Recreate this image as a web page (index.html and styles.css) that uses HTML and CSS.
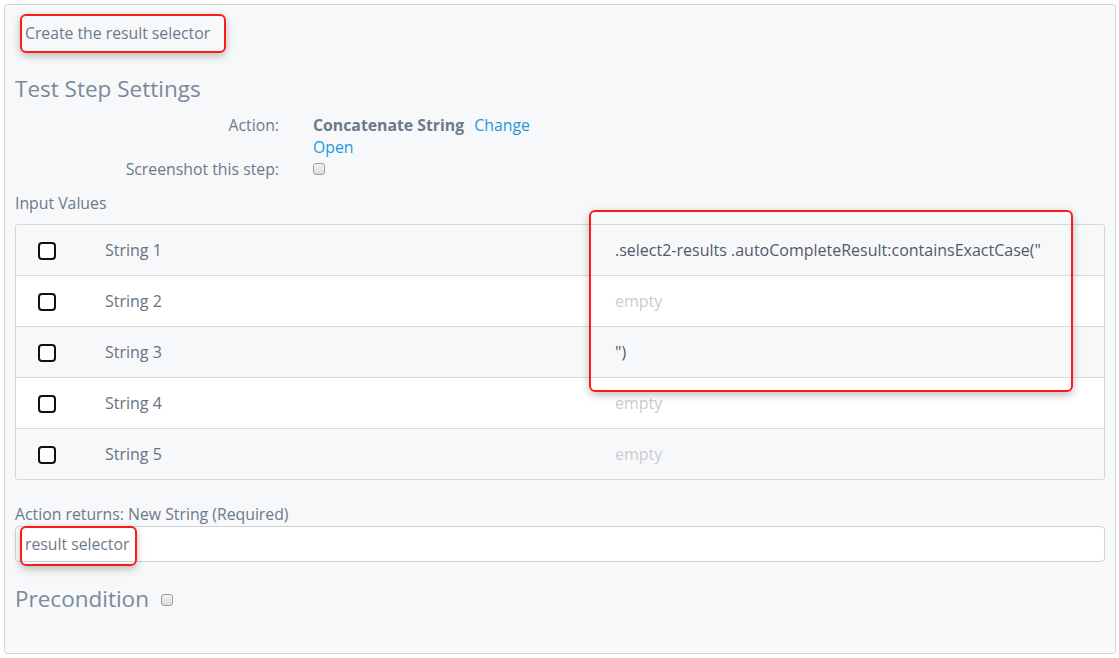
FILE: index.html
```html
<!DOCTYPE html>
<html>
<head>
<meta charset="utf-8">
<link rel="stylesheet" href="styles.css">
</head>
<body>
<div class="panel">
  <div class="note">Create the result selector</div>
  <h2 class="title">Test Step Settings</h2>
  <div class="settings">
    <div class="label">Action:</div>
    <div class="value"><b class="action-name">Concatenate String</b> <a class="link">Change</a><br><a class="link">Open</a></div>
    <div class="label">Screenshot this step:</div>
    <div class="value"><span class="mini-check"></span></div>
  </div>
  <div class="section-label">Input Values</div>
  <div class="table-wrap">
    <div class="table">
      <div class="row odd"><div class="cell-check"><span class="check"></span></div><div class="cell-name">String 1</div><div class="cell-val">.select2-results .autoCompleteResult:containsExactCase("</div></div>
      <div class="row"><div class="cell-check"><span class="check"></span></div><div class="cell-name">String 2</div><div class="cell-val empty">empty</div></div>
      <div class="row odd"><div class="cell-check"><span class="check"></span></div><div class="cell-name">String 3</div><div class="cell-val">")</div></div>
      <div class="row"><div class="cell-check"><span class="check"></span></div><div class="cell-name">String 4</div><div class="cell-val empty">empty</div></div>
      <div class="row odd"><div class="cell-check"><span class="check"></span></div><div class="cell-name">String 5</div><div class="cell-val empty">empty</div></div>
    </div>
    <div class="annot annot-table"></div>
  </div>
  <div class="section-label returns">Action returns: New String (Required)</div>
  <div class="input-wrap">
    <div class="input">result selector</div>
    <div class="annot annot-input"></div>
  </div>
  <div class="precondition"><span class="pre-title">Precondition</span><span class="mini-check"></span></div>
</div>
</body>
</html>
```
FILE: styles.css
```css
* { box-sizing: border-box; }
html, body { margin: 0; padding: 0; background: #ffffff; }
body {
  font-family: "Open Sans", "Liberation Sans", sans-serif;
  color: #6c7a89;
  padding: 4px;
  width: 1119px;
  height: 658px;
}
.panel {
  width: 1112px;
  height: 650px;
  background: #f7f8fa;
  border: 1px solid #d3d6da;
  border-radius: 3px;
  padding: 9px 10px 0 10px;
}
.note {
  display: inline-block;
  width: 206px;
  height: 39px;
  border: 2px solid #ff1a1a;
  border-radius: 6px;
  box-shadow: 0 3px 8px rgba(0,0,0,0.25);
  padding: 6px 0 0 3px;
  margin-left: 5px;
  font-size: 15.75px;
  line-height: 22px;
  color: #6c7a89;
  white-space: nowrap;
}
.title {
  margin: 21px 0 0 0;
  font-size: 22.5px;
  font-weight: 400;
  line-height: 30px;
  color: #7a8a9b;
}
.settings {
  display: grid;
  grid-template-columns: 264px 1fr;
  column-gap: 34px;
  margin-top: 10px;
  font-size: 15.8px;
  line-height: 22px;
}
.label { text-align: right; color: #6c7a89; }
.value { color: #6c7a89; }
.action-name { font-weight: 700; color: #6c7a89; margin-right: 6px; }
.link { color: #1d98d8; text-decoration: none; }
.mini-check {
  display: inline-block;
  width: 12px;
  height: 12px;
  border: 1px solid #9aa0a6;
  border-radius: 3px;
  background: linear-gradient(#f4f4f4, #dcdcdc);
  vertical-align: middle;
  position: relative;
  top: -2px;
}
.section-label {
  margin-top: 12px;
  font-size: 15.8px;
  line-height: 22px;
  color: #6c7a89;
}
.table-wrap { position: relative; margin-top: 10px; }
.table {
  border: 1px solid #d3d6da;
  border-radius: 3px;
  width: 1090px;
  overflow: hidden;
}
.row {
  display: grid;
  grid-template-columns: 89px 510px 1fr;
  align-items: center;
  height: 51px;
  background: #ffffff;
  border-top: 1px solid #d9dcdf;
  font-size: 16px;
}
.row:first-child { border-top: none; height: 50px; }
.row.odd { background: #f7f8fa; }
.cell-check { padding-left: 22px; display: flex; align-items: center; padding-top: 2px; }
.check {
  display: inline-block;
  width: 18px;
  height: 18px;
  border: 2px solid #111111;
  border-radius: 4px;
  background: #ffffff;
}
.cell-name { color: #66737f; }
.cell-val { color: #505b67; }
.cell-val.empty { color: #c9cdd1; }
.annot {
  position: absolute;
  border: 2px solid #ff1a1a;
  border-radius: 6px;
  box-shadow: 0 3px 8px rgba(0,0,0,0.25);
  pointer-events: none;
}
.annot-table { left: 574px; top: -14px; width: 484px; height: 182px; }
.returns { margin-top: 23px; }
.input-wrap { position: relative; margin-top: 1px; }
.input {
  width: 1090px;
  height: 36px;
  background: #ffffff;
  border: 1px solid #cfd3d7;
  border-radius: 4px;
  padding: 6px 9px 0 9px;
  font-size: 15.75px;
  line-height: 22px;
  color: #6c7a89;
}
.annot-input { left: 5px; top: 0; width: 117px; height: 40px; }
.precondition {
  margin-top: 22px;
  display: flex;
  align-items: center;
  gap: 12px;
}
.pre-title { font-size: 22.5px; line-height: 30px; color: #7a8a9b; }
.precondition .mini-check { top: 1px; }
```
